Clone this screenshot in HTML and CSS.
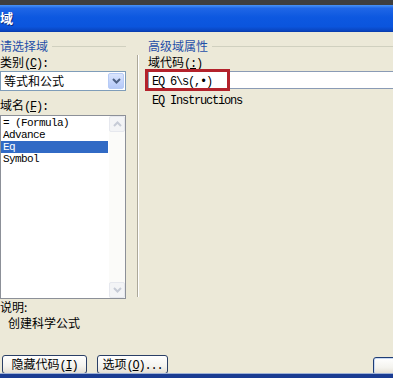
FILE: index.html
```html
<!DOCTYPE html>
<html lang="zh-CN">
<head>
    <meta charset="UTF-8">
    <meta name="viewport" content="width=device-width, initial-scale=1.0">
    <title>域</title>
    <link rel="stylesheet" href="styles.css">
</head>
<body>
    <div class="screen">
        <div class="topstrip"></div>
        <div class="titlebar"><span class="title">域</span></div>

        <div class="dialog">
            <div class="panes">
                <div class="left">
                    <div class="group-head">请选择域</div>
                    <div class="label">类别<span class="lat">(<u>C</u>):</span></div>
                    <div class="combo">
                        <span class="combo-text">等式和公式</span>
                        <span class="combo-btn">
                            <svg width="9" height="6" viewBox="0 0 9 6"><path d="M1 1 L4.5 4.5 L8 1" fill="none" stroke="#4d6185" stroke-width="2"/></svg>
                        </span>
                    </div>
                    <div class="label gap">域名<span class="lat">(<u>F</u>):</span></div>
                    <div class="listbox">
                        <ul class="items">
                            <li>= (Formula)</li>
                            <li>Advance</li>
                            <li class="selected">Eq</li>
                            <li>Symbol</li>
                        </ul>
                        <div class="vscroll">
                            <span class="sb-btn">
                                <svg width="9" height="6" viewBox="0 0 9 6"><path d="M1 5 L4.5 1.5 L8 5" fill="none" stroke="#c6cbd6" stroke-width="2"/></svg>
                            </span>
                            <span class="sb-btn">
                                <svg width="9" height="6" viewBox="0 0 9 6"><path d="M1 1 L4.5 4.5 L8 1" fill="none" stroke="#c6cbd6" stroke-width="2"/></svg>
                            </span>
                        </div>
                    </div>
                    <div class="label tight">说明:</div>
                    <div class="desc">创建科学公式</div>
                </div>

                <div class="right">
                    <div class="group-head">高级域属性</div>
                    <div class="right-body">
                        <div class="label">域代码<span class="lat">(<u>:</u>)</span></div>
                        <div class="codebox">
                            <span class="lat">EQ 6\s(,•)</span>
                            <div class="mark"></div>
                        </div>
                        <div class="hint lat">EQ Instructions</div>
                    </div>
                </div>
            </div>

            <div class="buttons">
                <button class="btn wide">隐藏代码<span class="lat">(<u>I</u>)</span></button>
                <button class="btn">选项<span class="lat">(<u>O</u>)...</span></button>
                <span class="spacer"></span>
                <button class="btn default"></button>
            </div>
        </div>

        <div class="frame-bottom"></div>
    </div>
</body>
</html>
```

FILE: styles.css
```css
body {
    margin: 0;
    padding: 0;
    font-family: 'Noto Sans CJK SC', sans-serif;
    font-size: 12px;
    color: #000;
    background: #ece9d8;
}
.screen {
    width: 393px;
    height: 378px;
    overflow: hidden;
    display: flex;
    flex-direction: column;
}
.topstrip {
    height: 5px;
    background: #3e3e3e;
}
.titlebar {
    height: 28px;
    background: linear-gradient(to bottom, #4a93f5 0%, #1f66e6 12%, #0d58e0 45%, #0b55dd 80%, #0a45c0 95%, #083aa8 100%);
    display: flex;
    align-items: center;
}
.title {
    margin-left: 0;
    color: #fff;
    font-weight: bold;
    font-size: 13px;
    line-height: 14px;
    text-shadow: 1px 1px 0 #0a2a80;
}
.dialog {
    height: 341px;
    background: #ece9d8;
    display: flex;
    flex-direction: column;
}
.panes {
    display: flex;
    padding-top: 7px;
}
.left {
    width: 126px;
    flex-shrink: 0;
}
.right {
    flex: 1;
    margin-left: 11px;
}
.right .group-head {
    padding-left: 11px;
}
.lat {
    font-family: 'Liberation Mono', monospace;
    letter-spacing: -1.2px;
}
.group-head {
    display: flex;
    align-items: center;
    line-height: 14px;
    color: #1f4fa8;
}
.group-head::after {
    content: "";
    flex: 1;
    height: 1px;
    margin-left: 4px;
    background: #d0d0bf;
}
.label {
    line-height: 14px;
    margin-top: 2px;
    white-space: nowrap;
}
.label.gap {
    margin-top: 7px;
}
.label.tight {
    margin-top: 1px;
}
.combo {
    height: 20px;
    box-sizing: border-box;
    border: 1px solid #7f9db9;
    background: #fff;
    display: flex;
    align-items: center;
    padding: 1px;
}
.combo-text {
    flex: 1;
    padding-left: 2px;
    line-height: 16px;
}
.combo-btn {
    width: 16px;
    height: 16px;
    box-sizing: border-box;
    border: 1px solid #b6cbf6;
    border-radius: 2px;
    background: linear-gradient(to bottom, #dbe5fc, #c2d3fb 60%, #b5c9f7);
    display: flex;
    align-items: center;
    justify-content: center;
}
.listbox {
    margin-top: 1px;
    height: 184px;
    box-sizing: border-box;
    border: 1px solid #8c9098;
    background: #fff;
    display: flex;
}
.items {
    list-style: none;
    margin: 0;
    padding: 1px 0 0 0;
    flex: 1;
}
.items li {
    height: 12px;
    line-height: 12px;
    padding-left: 2px;
    font-family: 'Liberation Mono', monospace;
    font-size: 11px;
    letter-spacing: -0.6px;
}
.items li.selected {
    background: #316ac5;
    color: #fff;
    margin-right: 1px;
}
.vscroll {
    width: 16px;
    background: #fbfbf9;
    display: flex;
    flex-direction: column;
    justify-content: space-between;
}
.sb-btn {
    height: 16px;
    box-sizing: border-box;
    border: 1px solid #e6e8ee;
    border-radius: 2px;
    background: #f3f4f6;
    display: flex;
    align-items: center;
    justify-content: center;
}
.desc {
    margin-top: 2px;
    line-height: 14px;
    padding-left: 8px;
}
.right-body {
    margin-top: 1px;
    height: 242px;
    border-left: 1px solid #aca899;
    box-shadow: inset 1px 0 0 #fff;
    padding-left: 10px;
}
.codebox {
    position: relative;
    height: 18px;
    box-sizing: border-box;
    margin-right: -20px;
    border: 1px solid #8a9bb5;
    background: #fff;
    padding-left: 3px;
    line-height: 16px;
}
.mark {
    position: absolute;
    left: -4px;
    top: -3px;
    width: 85px;
    height: 22px;
    box-sizing: border-box;
    border: 3px solid #b3222b;
}
.hint {
    margin-top: 6px;
    padding-left: 4px;
    line-height: 12px;
}
.buttons {
    display: flex;
    margin-top: 25px;
    padding-left: 2px;
    gap: 10px;
}
.btn {
    height: 19px;
    width: 71px;
    box-sizing: border-box;
    border: 1px solid #2a3f66;
    border-radius: 3px;
    background: linear-gradient(to bottom, #ffffff, #f4f3ee 60%, #e3ded3);
    font-family: 'Noto Sans CJK SC', sans-serif;
    font-size: 12px;
    line-height: 15px;
    padding: 0;
    color: #000;
}
.btn.wide {
    width: 85px;
}
.spacer {
    flex: 1;
}
.btn.default {
    margin-top: 2px;
    height: 18px;
    width: 32px;
    margin-right: -12px;
    border-color: #1f3d75;
    box-shadow: inset 0 0 0 1px #c9d9f3;
}
.frame-bottom {
    height: 4px;
    border-top: 1px solid #9fb2d6;
    background: #1a3c92;
}
```
